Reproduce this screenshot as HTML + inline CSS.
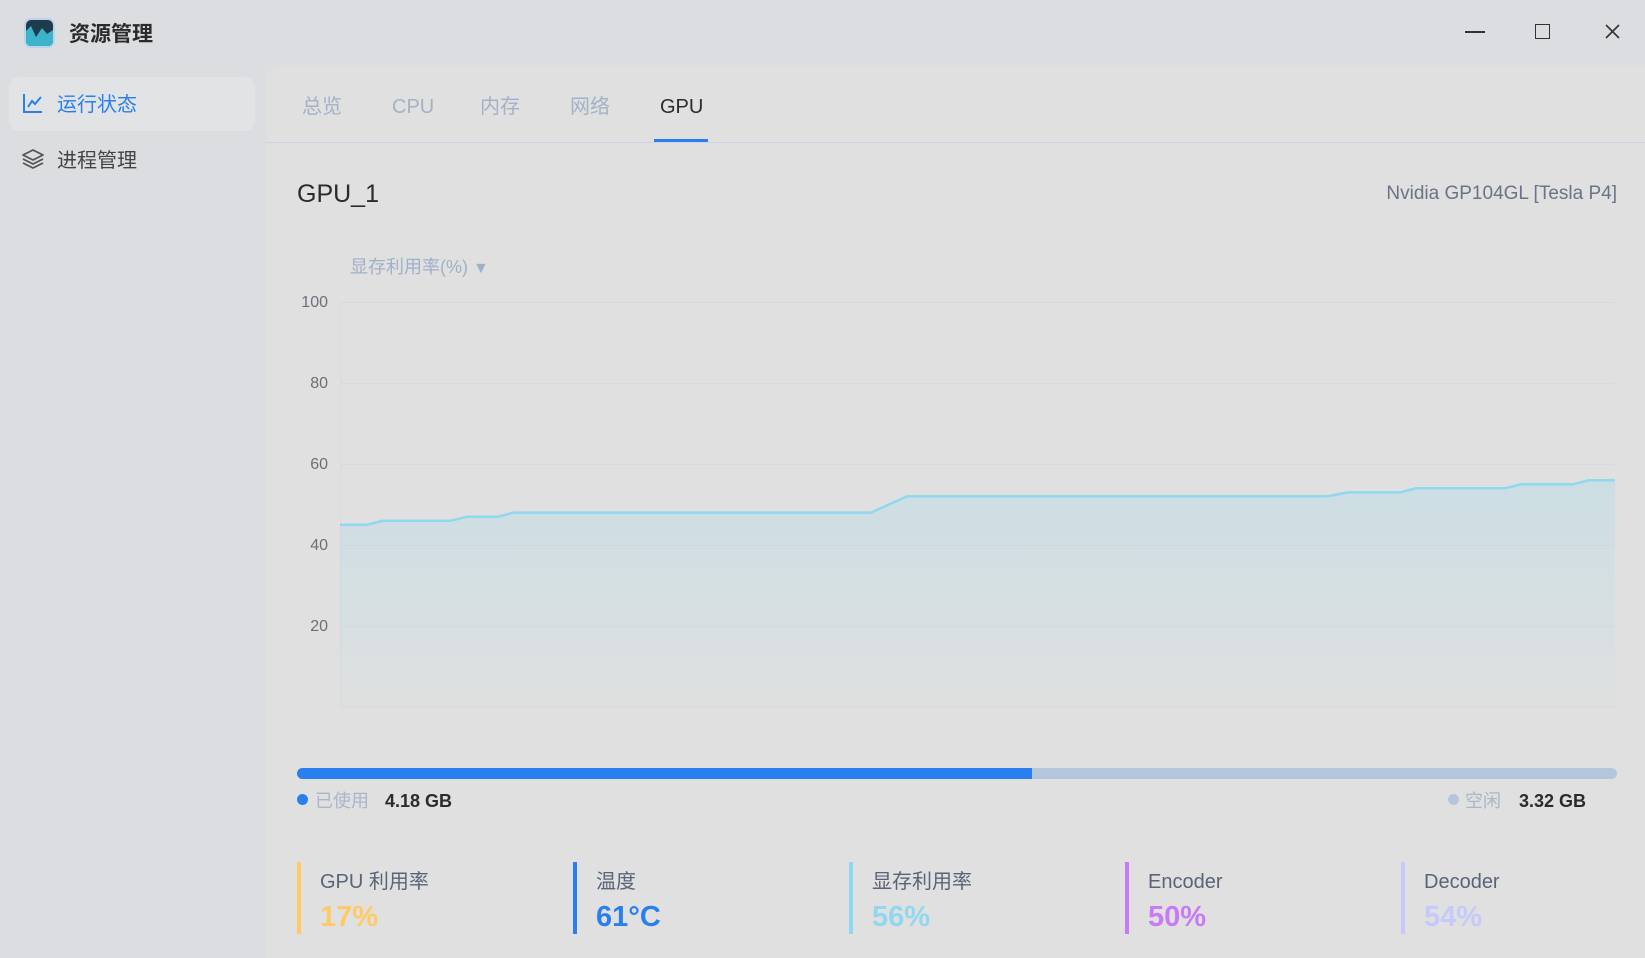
<!DOCTYPE html>
<html><head><meta charset="utf-8"><style>
*{margin:0;padding:0;box-sizing:border-box}
body{width:1645px;height:958px;background:#dcdde0;font-family:"Liberation Sans","Noto Sans CJK SC",sans-serif;position:relative;overflow:hidden;color:#333}
div{line-height:30px}
.a{position:absolute;white-space:nowrap}
#main{position:absolute;left:266px;top:65px;width:1379px;height:893px;background:#e0e0e0;border-top-left-radius:16px}
.tab{position:absolute;top:92px;font-size:20px;color:#a3b2c6}
.stat{position:absolute;top:862px;height:72px;width:4px}
.lab{position:absolute;top:867px;font-size:20px;color:#5a6478}
.val{position:absolute;top:902px;font-size:29px;font-weight:bold}
.yl{position:absolute;right:1317px;font-size:16px;color:#6a6f78}
</style></head><body>
<svg class="a" style="left:23px;top:17px" width="33" height="32" viewBox="0 0 33 32"><rect x="1" y="1" width="31" height="30" rx="7" fill="#bcd3ee"/><rect x="3" y="3" width="27" height="26" rx="5" fill="#1f3b4d"/><path d="M3 14 L8 9 L13 20 L19 11 L24 17 L30 13 L30 24 Q30 29 25 29 L8 29 Q3 29 3 24Z" fill="#3bb3c9"/></svg>
<div class="a" style="left:69px;top:20px;font-size:21px;font-weight:bold;color:#2b2b2b">资源管理</div>
<div class="a" style="left:1465px;top:31px;width:20px;height:2px;background:#333"></div>
<div class="a" style="left:1535px;top:24px;width:15px;height:15px;border:1.5px solid #333"></div>
<svg class="a" style="left:1605px;top:24px" width="15" height="15"><path d="M1 1L14 14M14 1L1 14" stroke="#333" stroke-width="1.6"/></svg>
<div class="a" style="left:9px;top:77px;width:246px;height:54px;background:#e2e3e5;border-radius:10px"></div>
<svg class="a" style="left:22px;top:92px" width="22" height="22"><path d="M2 2V20H20" stroke="#2a7ff0" stroke-width="2" fill="none"/><path d="M6 15L10 9L13 12L19 5" stroke="#2a7ff0" stroke-width="2" fill="none"/></svg>
<div class="a" style="left:57px;top:90px;font-size:20px;color:#2a7ff0">运行状态</div>
<svg class="a" style="left:21px;top:147px" width="24" height="24"><path d="M12 3L22 8L12 13L2 8Z M2 12L12 17L22 12 M2 16L12 21L22 16" stroke="#555" stroke-width="1.8" fill="none" stroke-linejoin="round"/></svg>
<div class="a" style="left:57px;top:146px;font-size:20px;color:#444">进程管理</div>
<div id="main"></div>
<div class="tab" style="left:302px">总览</div>
<div class="tab" style="left:392px">CPU</div>
<div class="tab" style="left:480px">内存</div>
<div class="tab" style="left:570px">网络</div>
<div class="tab" style="left:660px;color:#2b2b2b">GPU</div>
<div class="a" style="left:266px;top:142px;width:1379px;height:1px;background:#ccd6e2"></div>
<div class="a" style="left:654px;top:139px;width:54px;height:3px;background:#2a7ff0"></div>
<div class="a" style="left:297px;top:179px;font-size:25px;color:#2b2b2b">GPU_1</div>
<div class="a" style="right:28px;top:179px;font-size:19px;color:#6a7486">Nvidia GP104GL [Tesla P4]</div>
<div class="a" style="left:350px;top:252px;font-size:18px;color:#9fb0c8">显存利用率(%) <span style="font-size:16px">▼</span></div>
<div class="yl" style="top:288px">100</div><div class="yl" style="top:369px">80</div><div class="yl" style="top:450px">60</div><div class="yl" style="top:531px">40</div><div class="yl" style="top:612px">20</div>
<svg class="a" style="left:0;top:0" width="1645" height="958">
<defs><linearGradient id="g" x1="0" y1="0" x2="0" y2="1"><stop offset="0" stop-color="#8fd8ef" stop-opacity="0.25"/><stop offset="1" stop-color="#8fd8ef" stop-opacity="0.02"/></linearGradient></defs>
<g stroke="#d8dadd" stroke-width="1"><line x1="340" y1="302.5" x2="1615" y2="302.5"/><line x1="340" y1="383.5" x2="1615" y2="383.5"/><line x1="340" y1="464.5" x2="1615" y2="464.5"/><line x1="340" y1="545.5" x2="1615" y2="545.5"/><line x1="340" y1="626.5" x2="1615" y2="626.5"/><line x1="340" y1="707.5" x2="1615" y2="707.5"/><line x1="340.5" y1="302" x2="340.5" y2="707"/></g>
<path d="M340 524.8L367 524.8L383 520.7L451 520.7L467 516.7L498 516.7L514 512.6L871 512.6L907 496.4L1327 496.4L1348 492.4L1400 492.4L1416 488.3L1505 488.3L1521 484.3L1573 484.3L1589 480.2L1615 480.2L1615 707L340 707Z" fill="url(#g)"/>
<path d="M340 524.8L367 524.8L383 520.7L451 520.7L467 516.7L498 516.7L514 512.6L871 512.6L907 496.4L1327 496.4L1348 492.4L1400 492.4L1416 488.3L1505 488.3L1521 484.3L1573 484.3L1589 480.2L1615 480.2" fill="none" stroke="#8fd8ef" stroke-width="2.5"/>
</svg>
<div class="a" style="left:297px;top:768px;width:1320px;height:11px;background:#b4c6dc;border-radius:6px"></div>
<div class="a" style="left:297px;top:768px;width:735px;height:11px;background:#2a7ff0;border-radius:6px 0 0 6px"></div>
<div class="a" style="left:297px;top:794px;width:11px;height:11px;border-radius:50%;background:#2a7ff0"></div>
<div class="a" style="left:315px;top:786px;font-size:18px;color:#a9b6c9">已使用</div>
<div class="a" style="left:385px;top:786px;font-size:18px;font-weight:bold;color:#2b2b2b">4.18 GB</div>
<div class="a" style="left:1448px;top:794px;width:11px;height:11px;border-radius:50%;background:#b4c6dc"></div>
<div class="a" style="left:1465px;top:786px;font-size:18px;color:#a9b6c9">空闲</div>
<div class="a" style="right:59px;top:786px;font-size:18px;font-weight:bold;color:#2b2b2b">3.32 GB</div>
<div class="stat" style="left:297px;background:#ffc966"></div><div class="lab" style="left:320px">GPU 利用率</div><div class="val" style="left:320px;color:#ffc966">17%</div>
<div class="stat" style="left:573px;background:#2a7ff0"></div><div class="lab" style="left:596px">温度</div><div class="val" style="left:596px;color:#2a7ff0">61°C</div>
<div class="stat" style="left:849px;background:#8fd8ef"></div><div class="lab" style="left:872px">显存利用率</div><div class="val" style="left:872px;color:#8fd8ef">56%</div>
<div class="stat" style="left:1125px;background:#c77bf5"></div><div class="lab" style="left:1148px">Encoder</div><div class="val" style="left:1148px;color:#c77bf5">50%</div>
<div class="stat" style="left:1401px;background:#c5c9fb"></div><div class="lab" style="left:1424px">Decoder</div><div class="val" style="left:1424px;color:#c5c9fb">54%</div>
</body></html>
